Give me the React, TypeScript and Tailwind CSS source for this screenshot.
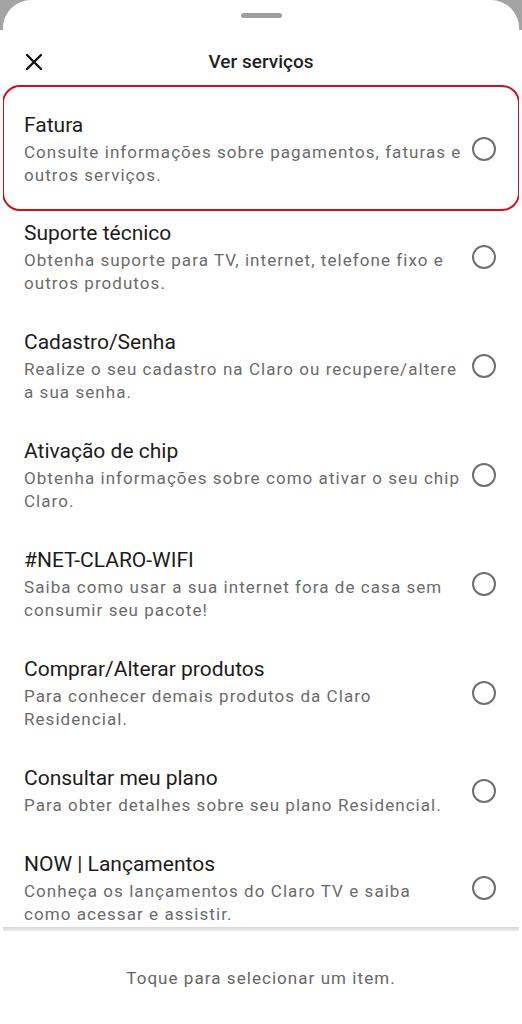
import React from "react";

type Item = { title: string; lines: string[] };

const items: Item[] = [
  { title: "Fatura", lines: ["Consulte informações sobre pagamentos, faturas e", "outros serviços."] },
  { title: "Suporte técnico", lines: ["Obtenha suporte para TV, internet, telefone fixo e", "outros produtos."] },
  { title: "Cadastro/Senha", lines: ["Realize o seu cadastro na Claro ou recupere/altere", "a sua senha."] },
  { title: "Ativação de chip", lines: ["Obtenha informações sobre como ativar o seu chip", "Claro."] },
  { title: "#NET-CLARO-WIFI", lines: ["Saiba como usar a sua internet fora de casa sem", "consumir seu pacote!"] },
  { title: "Comprar/Alterar produtos", lines: ["Para conhecer demais produtos da Claro", "Residencial."] },
  { title: "Consultar meu plano", lines: ["Para obter detalhes sobre seu plano Residencial."] },
  { title: "NOW | Lançamentos", lines: ["Conheça os lançamentos do Claro TV e saiba", "como acessar e assistir."] },
];

function Content({ item }: { item: Item }) {
  return (
    <>
      <div className="flex-1 min-w-0">
        <div className="text-[21px] leading-[28px] text-[#1c1c1c]">{item.title}</div>
        <div className="mt-[2px] text-[17px] leading-[23px] tracking-[0.062em] text-[#6b6b6b]">
          {item.lines.map((l, i) => (
            <div key={i} className="whitespace-nowrap">
              {l}
            </div>
          ))}
        </div>
      </div>
      <div className="w-[24px] h-[24px] shrink-0 rounded-full border-2 border-[#6f6f6f]" />
    </>
  );
}

export default function App() {
  return (
    <div
      className="w-[522px] h-[1024px] overflow-hidden bg-[linear-gradient(to_bottom,#a4a4a4_30px,#ffffff_30px)]"
      style={{ fontFamily: "Roboto, 'Noto Sans', sans-serif" }}
    >
      <div className="mx-[3px] h-full rounded-t-[28px] bg-white flex flex-col">
        <div className="pt-[13px] flex justify-center">
          <div className="w-[41px] h-[5px] rounded-full bg-[#9e9e9e]" />
        </div>
        <div className="mt-[26px] h-[36px] relative flex items-center justify-center">
          <svg
            className="absolute left-[22px] top-[9px]"
            width="18"
            height="18"
            viewBox="0 0 18 18"
            fill="none"
            stroke="#141414"
            strokeWidth="2.4"
            strokeLinecap="round"
          >
            <path d="M2 2 L16 16 M16 2 L2 16" />
          </svg>
          <span className="text-[19px] font-medium text-[#1f1f1f]">Ver serviços</span>
        </div>
        <div className="flex-1 min-h-0 overflow-hidden pt-[5px]">
          <div className="-mx-[1px] border-2 border-[#d0101c] rounded-[18px] pl-[20px] pr-[22px] pt-[24px] pb-[22px] flex items-center gap-3">
            <Content item={items[0]} />
          </div>
          {items.slice(1).map((it, i) => (
            <div
              key={i}
              className={
                i === 0
                  ? "pl-[21px] pr-[23px] pt-[8px] pb-[23px] flex items-center gap-3"
                  : "pl-[21px] pr-[23px] pt-[10px] pb-[23px] flex items-center gap-3"
              }
            >
              <Content item={it} />
            </div>
          ))}
        </div>
        <div className="h-[4px] shrink-0 bg-[linear-gradient(to_bottom,#d6d6d6,#eeeeee)]" />
        <div className="h-[93px] shrink-0 flex items-center justify-center pt-[3px]">
          <span className="text-[17px] tracking-[0.062em] text-[#666666]">Toque para selecionar um item.</span>
        </div>
      </div>
    </div>
  );
}
